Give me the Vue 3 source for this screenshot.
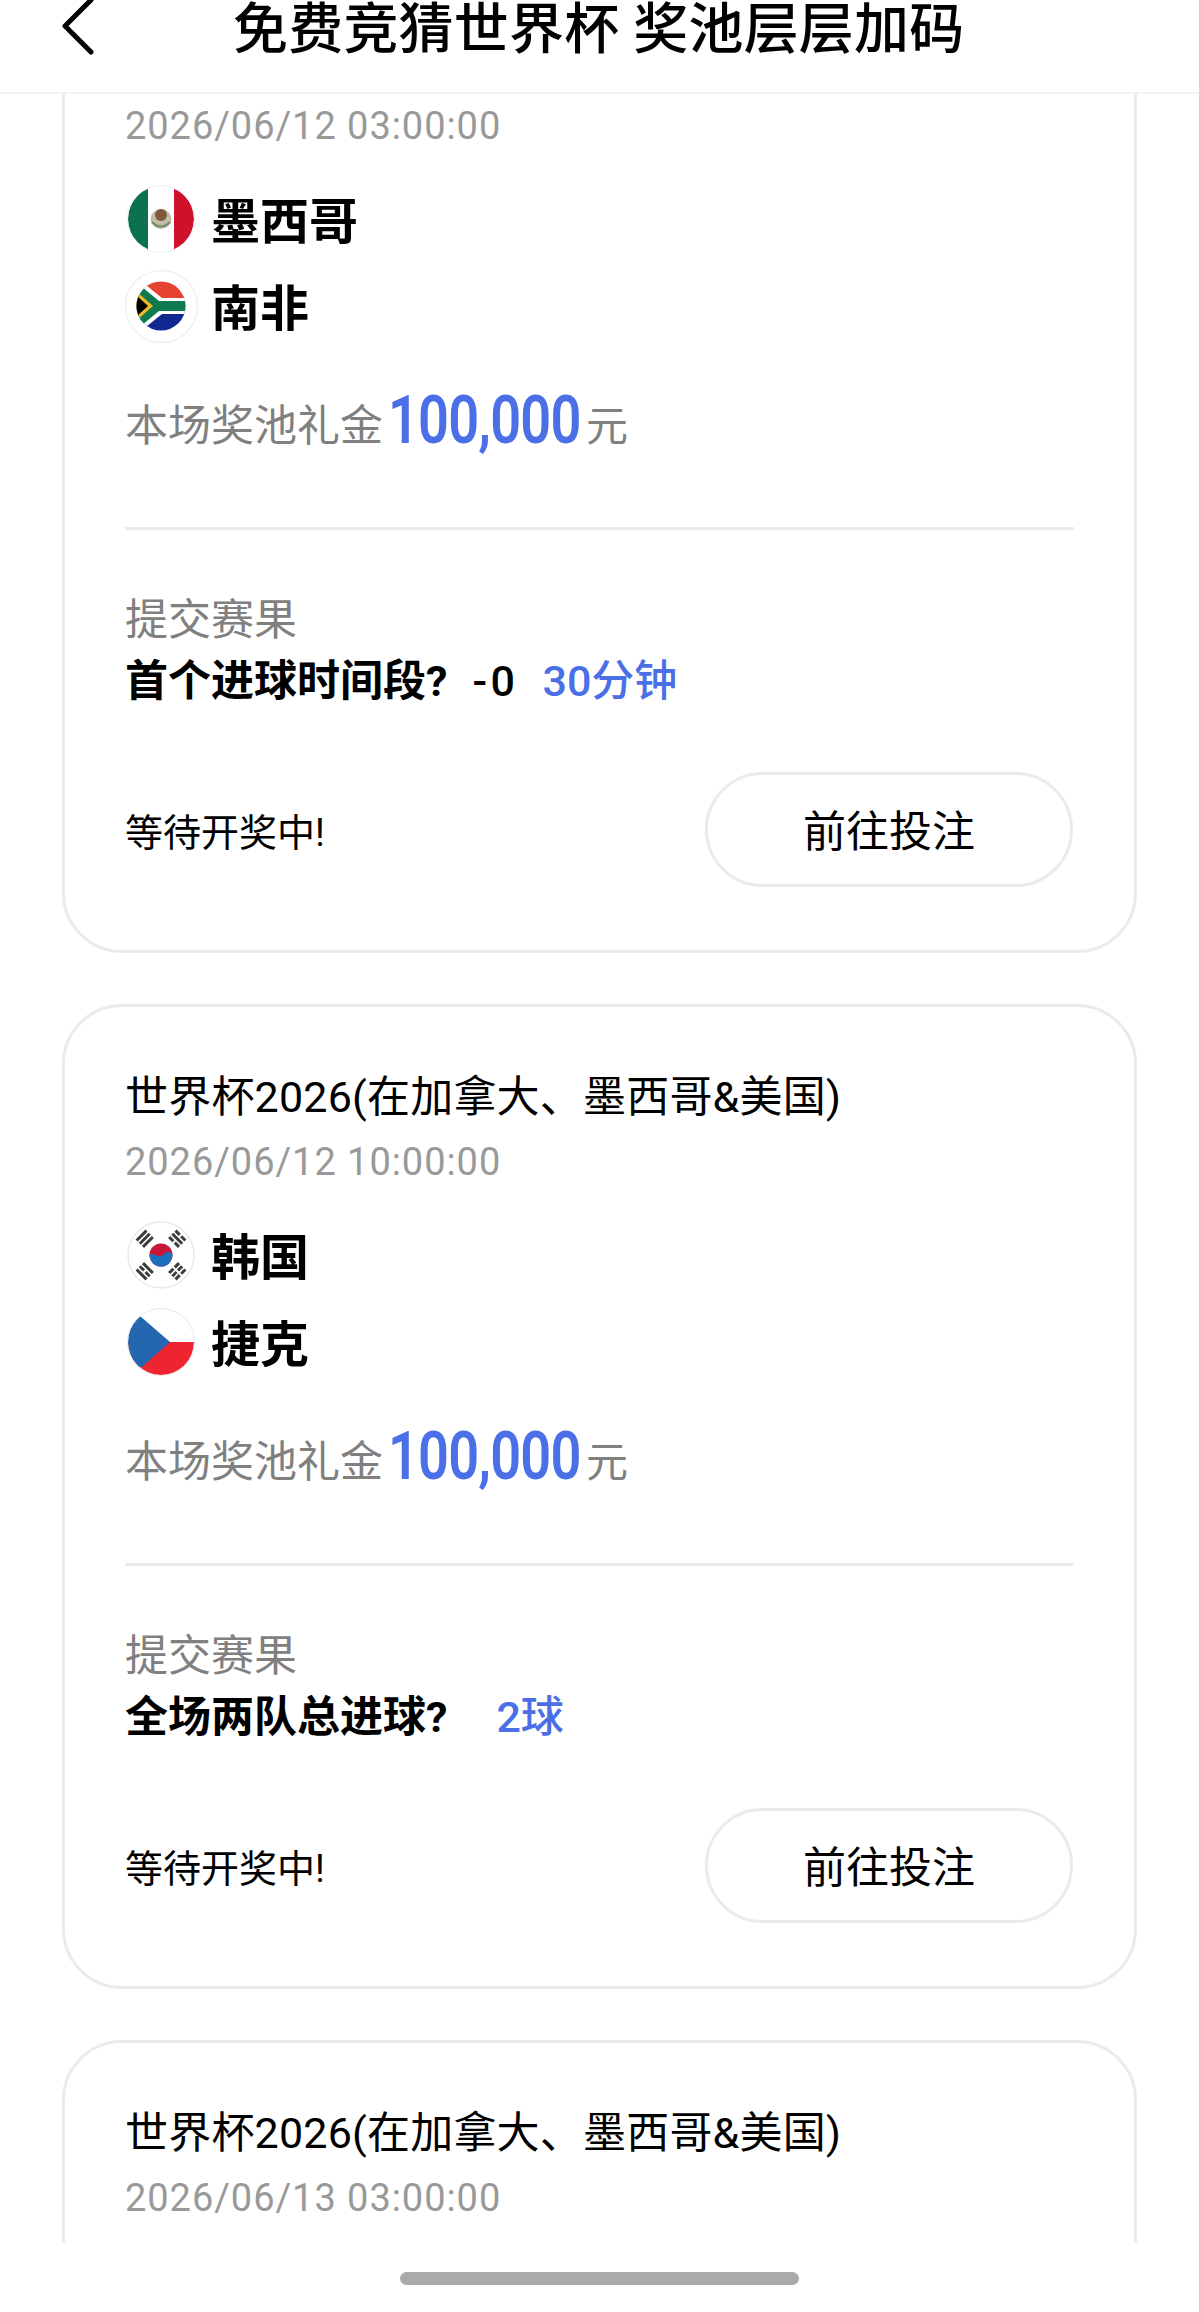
<template>
  <div class="page">
    <header class="nav">
      <svg class="back" viewBox="0 0 34 60" width="34" height="60">
        <path d="M31 3 L5 29 L31 55" fill="none" stroke="#000" stroke-width="5" stroke-linecap="round" stroke-linejoin="round" />
      </svg>
      <h1 class="nav-title">免费竞猜世界杯 奖池层层加码</h1>
    </header>

    <main class="viewport">
      <div class="list">
        <section v-for="match in matches" :key="match.time" class="card">
          <div class="league">世界杯2026(在加拿大、墨西哥&amp;美国)</div>
          <div class="time">{{ match.time }}</div>

          <div class="teams">
            <div v-for="team in match.teams" :key="team.code" class="team">
              <svg class="flag" viewBox="0 0 70 70" width="70" height="70">
                <defs>
                  <clipPath :id="'clip-' + team.code + '-' + match.id">
                    <circle cx="35" cy="35" :r="team.code === 'za' ? 24.5 : 33" />
                  </clipPath>
                </defs>

                <template v-if="team.code === 'mx'">
                  <g :clip-path="`url(#clip-mx-${match.id})`">
                    <rect x="0" y="0" width="70" height="70" fill="#fff" />
                    <rect x="0" y="0" width="22" height="70" fill="#0b7150" />
                    <rect x="48" y="0" width="22" height="70" fill="#d0112b" />
                    <ellipse cx="35" cy="35" rx="10.500" ry="10" fill="#c4bba8" />
                    <ellipse cx="35" cy="31" rx="6" ry="6" fill="#7d5a3c" />
                    <path d="M26 38 Q35 47 44 38" fill="none" stroke="#6c8f68" stroke-width="2" />
                  </g>
                  <circle cx="35" cy="35" r="33.5" fill="none" stroke="#eceff1" stroke-width="1" />
                </template>

                <template v-else-if="team.code === 'za'">
                  <circle cx="35.500" cy="35.500" r="36" fill="#fff" stroke="#f0f1f2" stroke-width="1.5" />
                  <g :clip-path="`url(#clip-za-${match.id})`">
                    <rect x="10" y="10" width="50" height="25" fill="#e5432f" />
                    <rect x="10" y="35" width="50" height="25" fill="#10288f" />
                    <path d="M10 6 L36 27 H62 V43 H36 L10 64 Z" fill="#fff" />
                    <path d="M10 11 L33 30 H62 V40 H33 L10 59 Z" fill="#0f7a50" />
                    <path d="M10 20 L27 35 L10 50 Z" fill="#f2b824" />
                    <path d="M10 24 L22 35 L10 46 Z" fill="#000" />
                  </g>
                </template>

                <template v-else-if="team.code === 'kr'">
                  <circle cx="35" cy="35" r="33" fill="#fff" stroke="#e8eaec" stroke-width="1.5" />
                  <circle cx="35" cy="35" r="11.5" fill="#c8173a" />
                  <path d="M23.5 35 A11.5 11.5 0 0 0 46.5 35 Q44 30 40 32.5 Q35 38 29 35 Q26 33 23.5 35 Z" fill="#1f70bc" />
                  <g fill="none" stroke="#3d3d3d" stroke-width="3">
                    <path transform="translate(35 35) rotate(-45) translate(0 -23)" d="M-7 -4.500 H7 M-7 0 H7 M-7 4.500 H7" />
                    <path transform="translate(35 35) rotate(45) translate(0 -23)" d="M-7 -4.500 H-1 M1 -4.500 H7 M-7 0 H7 M-7 4.500 H-1 M1 4.500 H7" />
                    <path transform="translate(35 35) rotate(-135) translate(0 -23)" d="M-7 -4.500 H7 M-7 0 H-1 M1 0 H7 M-7 4.500 H7" />
                    <path transform="translate(35 35) rotate(135) translate(0 -23)" d="M-7 -4.500 H-1 M1 -4.500 H7 M-7 0 H-1 M1 0 H7 M-7 4.500 H-1 M1 4.500 H7" />
                  </g>
                </template>

                <template v-else>
                  <g :clip-path="`url(#clip-cz-${match.id})`">
                    <rect x="0" y="0" width="70" height="35" fill="#fff" />
                    <rect x="0" y="35" width="70" height="35" fill="#ef2431" />
                    <path d="M14 9 L44 35 L16 60 L0 60 L0 9 Z" fill="#2566b0" />
                  </g>
                  <circle cx="35" cy="35" r="33.5" fill="none" stroke="#e6e8ea" stroke-width="1" />
                </template>
              </svg>
              <span class="team-name">{{ team.name }}</span>
            </div>
          </div>

          <div class="prize">
            <span class="prize-label">本场奖池礼金</span>
            <span class="prize-num">100,000</span>
            <span class="prize-unit">元</span>
          </div>

          <div class="divider"></div>

          <div class="sub-label">提交赛果</div>
          <div class="question">
            <span class="question-text">{{ match.question }}</span>
            <span class="suffix">{{ match.suffix }}</span>
            <span class="answer">{{ match.answer }}</span>
          </div>

          <div class="card-foot">
            <span class="status">等待开奖中!</span>
            <button class="bet">前往投注</button>
          </div>
        </section>
      </div>
    </main>

    <footer class="home">
      <div class="home-bar"></div>
    </footer>
  </div>
</template>

<script setup>
const matches = [
  {
    id: 1,
    time: '2026/06/12 03:00:00',
    teams: [
      { code: 'mx', name: '墨西哥' },
      { code: 'za', name: '南非' }
    ],
    question: '首个进球时间段?',
    suffix: '-0',
    answer: '30分钟'
  },
  {
    id: 2,
    time: '2026/06/12 10:00:00',
    teams: [
      { code: 'kr', name: '韩国' },
      { code: 'cz', name: '捷克' }
    ],
    question: '全场两队总进球?',
    suffix: '',
    answer: '2球'
  },
  {
    id: 3,
    time: '2026/06/13 03:00:00',
    teams: [
      { code: 'mx', name: '墨西哥' },
      { code: 'za', name: '南非' }
    ],
    question: '全场两队总进球?',
    suffix: '',
    answer: '2球'
  }
]
</script>

<style>
html,
body {
  margin: 0;
  background: #fff;
}
</style>

<style scoped>
.page {
  width: 1199px;
  height: 2312px;
  display: flex;
  flex-direction: column;
  overflow: hidden;
  background: #fff;
  font-family: Roboto, "Noto Sans CJK SC", sans-serif;
  color: #000;
}

.nav {
  height: 92px;
  flex: none;
  display: flex;
  align-items: flex-start;
  border-bottom: 2px solid #f3f3f3;
  padding-left: 60px;
  box-sizing: content-box;
}

.back {
  flex: none;
  margin-top: -3px;
}

.nav-title {
  margin: -7px 0 0 139px;
  font-size: 55px;
  line-height: 72px;
  font-weight: 500;
  letter-spacing: 0.2px;
  white-space: nowrap;
}

.viewport {
  flex: 1;
  min-height: 0;
  overflow: hidden;
}

.list {
  margin-top: -126px;
  padding: 0 62px;
  display: flex;
  flex-direction: column;
  gap: 51px;
}

.card {
  flex: none;
  box-sizing: border-box;
  border: 3px solid #ebebeb;
  border-radius: 60px;
  padding: 62px 60px 63px;
}

.league {
  font-size: 43px;
  line-height: 56px;
  letter-spacing: 0.2px;
  white-space: nowrap;
}

.time {
  margin-top: 12px;
  font-size: 38px;
  line-height: 50px;
  letter-spacing: 0.95px;
  color: #999;
}

.teams {
  margin-top: 24px;
}

.team {
  height: 87px;
  display: flex;
  align-items: center;
  gap: 15px;
}

.flag {
  flex: none;
  margin-left: 1px;
  overflow: visible;
}

.team-name {
  padding-bottom: 3px;
  font-size: 49px;
  font-weight: 700;
}

.prize {
  margin-top: 31px;
  height: 84px;
  display: flex;
  align-items: center;
  color: #808080;
  font-size: 43px;
}

.prize-num {
  width: 189px;
  margin: 0 9px 4px 5px;
  font-size: 66px;
  font-weight: 600;
  letter-spacing: -1px;
  white-space: nowrap;
  color: #4b6fe6;
  transform: scaleX(0.82);
  transform-origin: left center;
}

.prize-unit {
  font-size: 42px;
}

.divider {
  margin-top: 63px;
  height: 3px;
  background: #ebebeb;
}

.sub-label {
  margin-top: 62px;
  font-size: 43px;
  line-height: 56px;
  color: #808080;
}

.question {
  margin-top: 5px;
  display: flex;
  font-size: 43px;
  line-height: 56px;
}

.question-text {
  font-weight: 700;
}

.suffix {
  margin-left: 25px;
  margin-right: 24px;
  font-weight: 500;
  letter-spacing: 3.5px;
}

.answer {
  color: #4b6fe6;
  font-weight: 500;
}

.card-foot {
  margin-top: 63px;
  display: flex;
  align-items: center;
  justify-content: space-between;
}

.status {
  font-size: 38px;
}

.bet {
  width: 368px;
  height: 115px;
  margin-right: 1px;
  padding: 0 0 4px;
  border: 3px solid #ebebeb;
  border-radius: 58px;
  background: #fff;
  font: inherit;
  font-size: 43px;
  color: #000;
}

.home {
  height: 69px;
  flex: none;
  background: #fff;
  display: flex;
  justify-content: center;
  padding-top: 29px;
  box-sizing: border-box;
}

.home-bar {
  width: 399px;
  height: 13px;
  border-radius: 7px;
  background: #aaa;
}
</style>
